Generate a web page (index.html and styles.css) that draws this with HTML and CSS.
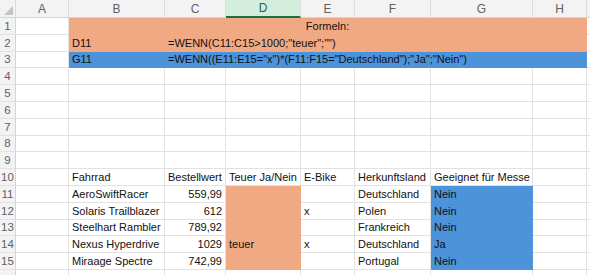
FILE: index.html
```html
<!DOCTYPE html>
<html>
<head>
    <meta charset="utf-8">
    <title>Formeln</title>
    <link rel="stylesheet" href="styles.css">
</head>
<body>
    <table class="sheet">
        <colgroup>
            <col class="c-rh">
            <col class="c-a">
            <col class="c-b">
            <col class="c-c">
            <col class="c-d">
            <col class="c-e">
            <col class="c-f">
            <col class="c-g">
            <col class="c-h">
            <col class="c-i">
        </colgroup>

        <!-- column letters -->
        <tr class="head">
            <th class="corner"><span class="tri"></span></th>
            <th>A</th>
            <th>B</th>
            <th>C</th>
            <th class="sel">D</th>
            <th>E</th>
            <th>F</th>
            <th>G</th>
            <th>H</th>
            <th></th>
        </tr>

        <!-- formula notes -->
        <tr>
            <th class="rh">1</th>
            <td></td>
            <td colspan="7" class="orange center">Formeln:</td>
            <td></td>
        </tr>
        <tr>
            <th class="rh">2</th>
            <td></td>
            <td class="orange">D11</td>
            <td colspan="6" class="orange">=WENN(C11:C15&gt;1000;"teuer";"")</td>
            <td></td>
        </tr>
        <tr>
            <th class="rh">3</th>
            <td></td>
            <td class="blue">G11</td>
            <td colspan="6" class="blue">=WENN((E11:E15="x")*(F11:F15="Deutschland");"Ja";"Nein")</td>
            <td></td>
        </tr>

        <tr><th class="rh">4</th><td></td><td></td><td></td><td></td><td></td><td></td><td></td><td></td><td></td></tr>
        <tr><th class="rh">5</th><td></td><td></td><td></td><td></td><td></td><td></td><td></td><td></td><td></td></tr>
        <tr><th class="rh">6</th><td></td><td></td><td></td><td></td><td></td><td></td><td></td><td></td><td></td></tr>
        <tr><th class="rh">7</th><td></td><td></td><td></td><td></td><td></td><td></td><td></td><td></td><td></td></tr>
        <tr><th class="rh">8</th><td></td><td></td><td></td><td></td><td></td><td></td><td></td><td></td><td></td></tr>
        <tr><th class="rh">9</th><td></td><td></td><td></td><td></td><td></td><td></td><td></td><td></td><td></td></tr>

        <!-- bike list -->
        <tr>
            <th class="rh">10</th>
            <td></td>
            <td>Fahrrad</td>
            <td>Bestellwert</td>
            <td>Teuer Ja/Nein</td>
            <td>E-Bike</td>
            <td>Herkunftsland</td>
            <td>Geeignet für Messe</td>
            <td></td>
            <td></td>
        </tr>
        <tr>
            <th class="rh">11</th>
            <td></td>
            <td>AeroSwiftRacer</td>
            <td class="num">559,99</td>
            <td class="orange"></td>
            <td></td>
            <td>Deutschland</td>
            <td class="blue">Nein</td>
            <td></td>
            <td></td>
        </tr>
        <tr>
            <th class="rh">12</th>
            <td></td>
            <td>Solaris Trailblazer</td>
            <td class="num">612</td>
            <td class="orange"></td>
            <td>x</td>
            <td>Polen</td>
            <td class="blue">Nein</td>
            <td></td>
            <td></td>
        </tr>
        <tr>
            <th class="rh">13</th>
            <td></td>
            <td>Steelhart Rambler</td>
            <td class="num">789,92</td>
            <td class="orange"></td>
            <td></td>
            <td>Frankreich</td>
            <td class="blue">Nein</td>
            <td></td>
            <td></td>
        </tr>
        <tr>
            <th class="rh">14</th>
            <td></td>
            <td>Nexus Hyperdrive</td>
            <td class="num">1029</td>
            <td class="orange">teuer</td>
            <td>x</td>
            <td>Deutschland</td>
            <td class="blue">Ja</td>
            <td></td>
            <td></td>
        </tr>
        <tr>
            <th class="rh">15</th>
            <td></td>
            <td>Miraage Spectre</td>
            <td class="num">742,99</td>
            <td class="orange"></td>
            <td></td>
            <td>Portugal</td>
            <td class="blue">Nein</td>
            <td></td>
            <td></td>
        </tr>
        <tr><th class="rh"></th><td></td><td></td><td></td><td></td><td></td><td></td><td></td><td></td><td></td></tr>
    </table>
</body>
</html>
```

FILE: styles.css
```css
/* Spreadsheet grid */
body {
    margin: 0;
    background-color: #fff;
    overflow: hidden;
}

.sheet {
    table-layout: fixed;
    border-collapse: separate;
    border-spacing: 0;
    width: 600px;
    font-family: "Liberation Sans", Arial, sans-serif;
    font-size: 11px;
    color: #111;
}

.c-rh { width: 16px; }
.c-a { width: 53px; }
.c-b { width: 96px; }
.c-c { width: 61px; }
.c-d { width: 75px; }
.c-e { width: 54px; }
.c-f { width: 76px; }
.c-g { width: 102px; }
.c-h { width: 54px; }
.c-i { width: 13px; }

tr {
    height: 16.8px;
}

td {
    box-sizing: border-box;
    padding: 0 3px 1px 3px;
    border-right: 1px solid #e2e2e2;
    border-bottom: 1px solid #e2e2e2;
    white-space: nowrap;
    vertical-align: bottom;
    line-height: 13px;
}

td.num {
    text-align: right;
}

td.center {
    text-align: center;
}

/* cell fills hide the gridlines */
td.orange {
    background-color: #f1a983;
    border-color: #f1a983;
}

td.blue {
    background-color: #4d93d9;
    border-color: #4d93d9;
}

/* headers */
th {
    padding: 0;
    font-weight: normal;
    color: #616161;
    background-color: #f3f3f3;
}

tr.head {
    height: 18px;
}

tr.head th {
    font-size: 12px;
    border-right: 1px solid #dcdcdc;
    border-bottom: 1px solid #d4d4d4;
    text-align: center;
    vertical-align: middle;
}

tr.head th.sel {
    background-color: #d3eedd;
    color: #1e6b41;
    border-bottom: 2px solid #1e7145;
}

th.corner {
    position: relative;
}

/* little triangle in the select-all corner */
.tri {
    position: absolute;
    right: 2px;
    bottom: 2px;
    width: 0;
    height: 0;
    border-left: 9px solid transparent;
    border-bottom: 9px solid #c3c3c3;
}

th.rh {
    font-size: 11.5px;
    text-align: center;
    vertical-align: middle;
    border-right: 1px solid #d4d4d4;
    border-bottom: 1px solid #e2e2e2;
}
```
